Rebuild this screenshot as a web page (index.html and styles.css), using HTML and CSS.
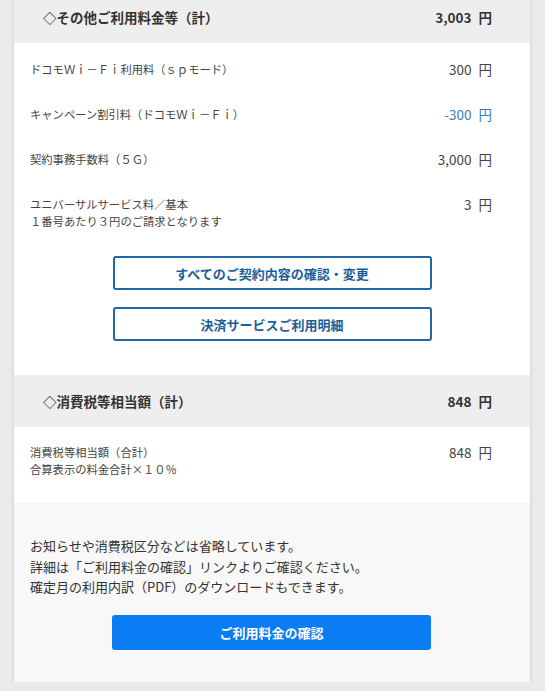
FILE: index.html
```html
<!DOCTYPE html>
<html lang="ja">
<head>
    <meta charset="utf-8">
    <meta name="viewport" content="width=device-width,initial-scale=1">
    <title>ご利用料金</title>
    <link rel="stylesheet" href="styles.css">
</head>
<body>
    <div class="card">
        <div class="sec-head">
            <span>◇その他ご利用料金等（計）</span>
            <span class="amt">3,003 円</span>
        </div>
        <div class="sec-body">
            <div class="row">
                <div class="lbl">ドコモＷｉ－Ｆｉ利用料（ｓｐモード）</div>
                <div class="amt">300 円</div>
            </div>
            <div class="row">
                <div class="lbl">キャンペーン割引料（ドコモＷｉ－Ｆｉ）</div>
                <div class="amt neg">-300 円</div>
            </div>
            <div class="row">
                <div class="lbl">契約事務手数料（５Ｇ）</div>
                <div class="amt">3,000 円</div>
            </div>
            <div class="row">
                <div class="lbl">ユニバーサルサービス料／基本<br>１番号あたり３円のご請求となります</div>
                <div class="amt">3 円</div>
            </div>
            <div class="btns">
                <a class="btn-line" href="#">すべてのご契約内容の確認・変更</a>
                <a class="btn-line" href="#">決済サービスご利用明細</a>
            </div>
        </div>
        <div class="sec-head">
            <span>◇消費税等相当額（計）</span>
            <span class="amt">848 円</span>
        </div>
        <div class="sec-body tax">
            <div class="row">
                <div class="lbl">消費税等相当額（合計）<br>合算表示の料金合計×１０％</div>
                <div class="amt">848 円</div>
            </div>
        </div>
        <div class="foot">
            <p>お知らせや消費税区分などは省略しています。<br>詳細は「ご利用料金の確認」リンクよりご確認ください。<br>確定月の利用内訳（PDF）のダウンロードもできます。</p>
            <a class="btn-blue" href="#">ご利用料金の確認</a>
        </div>
    </div>
</body>
</html>
```

FILE: styles.css
```css
body {
    margin: 0;
    background: #eaeaea;
    font-family: "Noto Sans CJK JP", "Noto Sans", sans-serif;
    color: #444;
}

a {
    text-decoration: none;
}

.card {
    width: 516px;
    margin: -9px 0 0 14px;
    background: #fff;
    box-shadow: 0 1px 3px rgba(0, 0, 0, 0.18);
}

.sec-head {
    height: 52px;
    display: flex;
    align-items: center;
    justify-content: space-between;
    padding: 0 38px 0 29px;
    background: #eeeeee;
    color: #333;
    font-weight: bold;
    font-size: 13.5px;
}

.sec-head .amt {
    font-size: 13.5px;
}

.sec-body {
    padding: 18px 38px 34px 16px;
}

.row {
    display: flex;
    justify-content: space-between;
    align-items: flex-start;
    margin-bottom: 28px;
}

.lbl {
    font-size: 11.3px;
    line-height: 16.5px;
}

.amt {
    font-size: 13.5px;
    line-height: 17px;
    white-space: nowrap;
    word-spacing: 4px;
}

.neg {
    color: #3b7dbb;
}

.btns {
    display: flex;
    flex-direction: column;
    align-items: center;
    gap: 17px;
    padding-left: 22px;
    margin-top: -1px;
}

.btn-line {
    box-sizing: border-box;
    width: 319px;
    height: 34px;
    display: flex;
    align-items: center;
    justify-content: center;
    border: 2px solid #1f69a6;
    border-radius: 3px;
    color: #1d5f98;
    font-weight: bold;
    font-size: 13px;
}

.sec-body.tax {
    padding-top: 17px;
    padding-bottom: 0;
    height: 59px;
}

.sec-body.tax .row {
    margin: 0;
}

.foot {
    background: #f8f8f8;
    padding: 33px 16px 32px;
}

.foot p {
    margin: 0 0 17px;
    font-size: 13px;
    line-height: 20.5px;
    color: #333;
}

.btn-blue {
    display: flex;
    align-items: center;
    justify-content: center;
    width: 319px;
    height: 35px;
    margin-left: 82px;
    border-radius: 3px;
    background: #0a7cf4;
    color: #fff;
    font-weight: bold;
    font-size: 13px;
}
```
